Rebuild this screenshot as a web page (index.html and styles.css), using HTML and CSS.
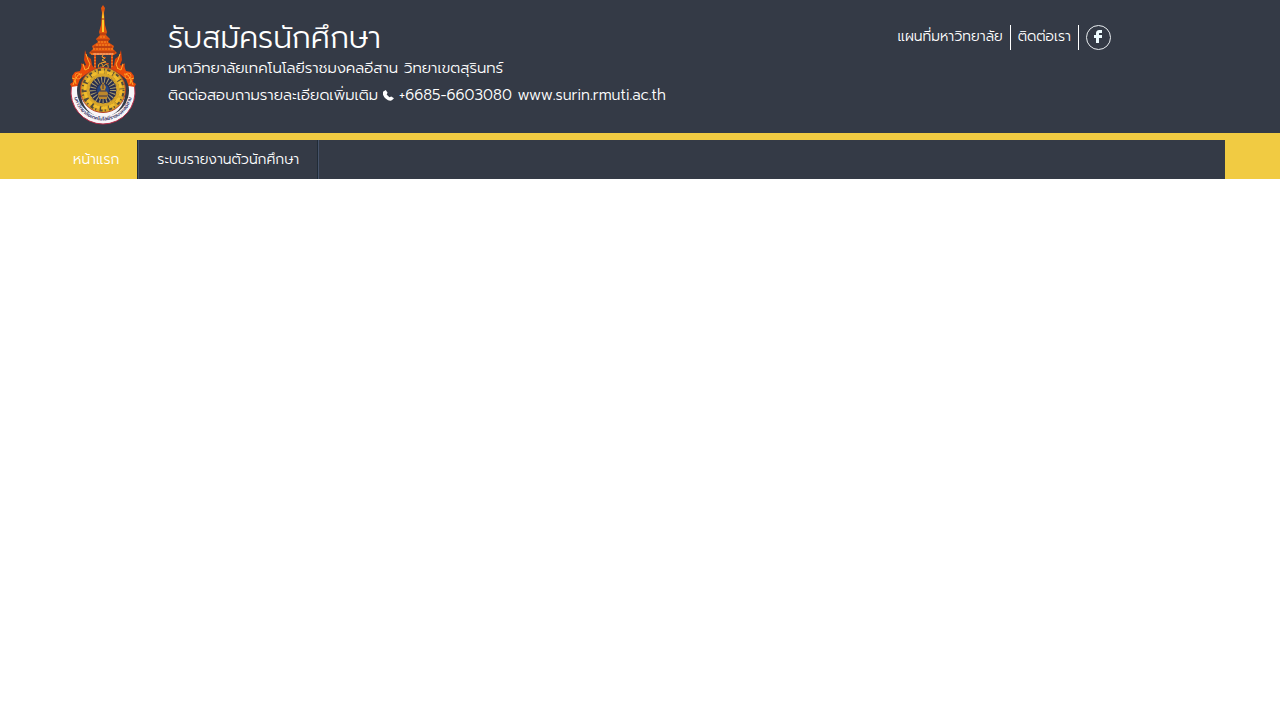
FILE: index.html
```html
<!DOCTYPE html>
<html lang="th">
<head>
<meta charset="utf-8">
<meta name="viewport" content="width=device-width, initial-scale=1">
<title>รับสมัครนักศึกษา</title>
<link rel="stylesheet" href="styles.css">
</head>
<body>
<header class="site-header">
  <div class="container header-row">
    <a class="logo" href="#" aria-label="หน้าแรก">
      <svg width="68" height="120" viewBox="0 0 68 120" aria-hidden="true">
        <defs>
          <path id="ring-text" d="M5 82A29.300 29.300 0 1 0 63 82"/>
        </defs>
        <!-- spire -->
        <path d="M34 0l2 3-1 5 1 12 2 7-1 3 4 4-2 3 6 4-1 3 4 4-3 2H23l-3-2 4-4-1-3 6-4-2-3 4-4-1-3 2-7 1-12-1-5z" fill="#e0530e"/>
        <path d="M34 5l1 7v15h-2V12z" fill="#ffcb28"/>
        <path d="M32 14h4M31 29h6M28 35h12M25 42h18M22 47h24" stroke="#9c3212" stroke-width="1"/>
        <path d="M31 32h6M29 37h10M27 40h14M24 44h20M22 49h24" stroke="#fb9222" stroke-width="1" stroke-dasharray="2 1"/>
        <path d="M24 49h20" stroke="#ffb38c" stroke-width="1"/>
        <!-- side columns -->
        <path d="M26 50v14M43 50v14" stroke="#d84d14" stroke-width="2"/>
        <path d="M26 52v10M43 52v10" stroke="#ffa02c" stroke-width="1" stroke-dasharray="1 2"/>
        <!-- flames -->
        <g id="flame">
          <path d="M16 45l2 6 4 3 1 6 3 4-4 3-7 2-2-4-1-7 3 3 2-1-2-5z" fill="#db430b"/>
          <path d="M14 58l4 6 3 2-5 4-5 4-3 8-5 1-2-4 3-2-1-6 3-4 5-1z" fill="#e94a0a"/>
          <path d="M17 49l2 6 2 4-2 5M14 59l2 6 4-2M13 69l-4 1-3 5 1 4M3 73l3 1M4 80l2-5" fill="none" stroke="#ffac2c" stroke-width="1"/>
          <circle cx="9" cy="71" r="3" fill="none" stroke="#ff8920"/>
        </g>
        <use href="#flame" transform="translate(68 0) scale(-1 1)"/>
        <!-- monogram -->
        <path d="M34 50l-1 2 3 1-3 2 4 2-5 1M30 63c-2-3 1-6 3-4s0 4-2 3M34 63c1-5 6-5 5 0" fill="none" stroke="#f9a32c" stroke-width="1"/>
        <path d="M35 52l2 1M37 58l3 1" fill="none" stroke="#e64b12"/>
        <!-- seal -->
        <path d="M2.400 82l6-1a26 26 0 1 0 51.200 0l6 1a32 32 0 1 1-63.200 0z" fill="#f8f5f8"/>
        <path d="M12 88h44a22 24 0 0 1-44 0z" fill="#f8f5f8"/>
        <path d="M2.400 82a32 32 0 1 0 63.200 0" fill="none" stroke="#b92d48" stroke-width="1"/>
        <circle cx="34" cy="85" r="22.500" fill="#d8a528" stroke="#b43f26"/>
        <circle cx="34" cy="85" r="19" fill="none" stroke="#554c3b" stroke-width="5" stroke-dasharray="1 2 3 3"/>
        <circle cx="34" cy="85" r="18" fill="none" stroke="#f1bd2d" stroke-width="3" stroke-dasharray="6 2"/>
        <circle cx="34" cy="85" r="14" fill="#272d51" stroke="#d9a72e"/>
        <circle cx="34" cy="85" r="10" fill="none" stroke="#aa9b69" stroke-width="6" stroke-dasharray="1 2"/>
        <circle cx="34" cy="85" r="6" fill="#244481"/>
        <path d="M34 77l3 5-1 3 3 3-1 6h-8l-1-6 3-3-1-3z" fill="#bd872c"/>
        <path d="M31 86h6M30 91h8M34 79v5" stroke="#323252" stroke-width="1"/>
        <text class="seal-text"><textPath href="#ring-text" startOffset="50%" text-anchor="middle">มหาวิทยาลัยเทคโนโลยีราชมงคลอีสาน</textPath></text>
      </svg>
    </a>
    <div class="brand">
      <h1>รับสมัครนักศึกษา</h1>
      <p>มหาวิทยาลัยเทคโนโลยีราชมงคลอีสาน วิทยาเขตสุรินทร์</p>
      <p class="contact"><span>ติดต่อสอบถามรายละเอียดเพิ่มเติม</span><svg class="phone" width="11" height="11" viewBox="0 0 12 12" aria-hidden="true"><path d="M0 2L3 0 5 3 4 5 7 8 9 7 12 9 10 11C6 14-2 6 0 2z" fill="currentColor"/></svg><span>+6685-6603080 www.surin.rmuti.ac.th</span></p>
    </div>
    <nav class="top-links" aria-label="ลิงก์ด่วน">
      <a href="#">แผนที่มหาวิทยาลัย</a>
      <a href="#">ติดต่อเรา</a>
      <a class="facebook" href="#" aria-label="Facebook"><svg width="25" height="25" viewBox="0 0 25 25" aria-hidden="true"><circle cx="12.500" cy="12.500" r="12" fill="none" stroke="#e9edf0"/><path d="M16 5h-2c-3 0-4 1-4 4v1H8v3h2v5h3v-5h3v-3h-3V9c0-1 0-1 1-1h2z" fill="#effcff"/></svg></a>
    </nav>
  </div>
</header>
<div class="menu-band">
  <nav class="container menu" aria-label="เมนูหลัก">
    <a class="active" href="#">หน้าแรก</a>
    <a href="#">ระบบรายงานตัวนักศึกษา</a>
  </nav>
</div>
</body>
</html>
```
FILE: styles.css
```css
* { box-sizing: border-box; }
body { margin: 0; background: #fff; color: #fff; font-family: Prompt, Kanit, "Noto Sans Thai", "Noto Sans", sans-serif; font-size: 14px; font-weight: 300; }
a { color: inherit; text-decoration: none; }
.container { width: 100%; max-width: 1170px; margin: 0 auto; }
.site-header { background: #343a46; }
.header-row { display: flex; align-items: flex-start; min-height: 133px; padding: 5px 114px 0 14px; }
.logo { flex: none; width: 68px; margin-right: 31px; }
.logo svg { display: block; }
.seal-text { font-size: 5px; font-weight: 500; fill: #29295c; }
.brand { padding-top: 16px; white-space: nowrap; }
h1 { margin: 0; font-size: 30px; font-weight: 300; line-height: 34px; }
p { margin: 0; font-size: 15px; line-height: 28px; }
.brand h1 + p { line-height: 26px; }
.contact { display: flex; align-items: center; gap: 5px; }
.top-links { display: flex; margin-left: auto; padding-top: 20px; line-height: 24px; white-space: nowrap; }
.top-links a { height: 25px; padding: 0 7px; border-right: 1px solid #fff; }
.top-links .facebook { padding-right: 0; border: 0; }
.facebook svg { display: block; }
.menu-band { padding-top: 7px; background: #f1cb42; }
.menu { display: flex; gap: 1px; background: #343a46; line-height: 39px; }
.menu a { height: 39px; padding: 0 18px; border-right: 1px solid #202b36; box-shadow: 1px 0 #46536a; white-space: nowrap; }
.menu .active { background: #f1cb42; }
```
